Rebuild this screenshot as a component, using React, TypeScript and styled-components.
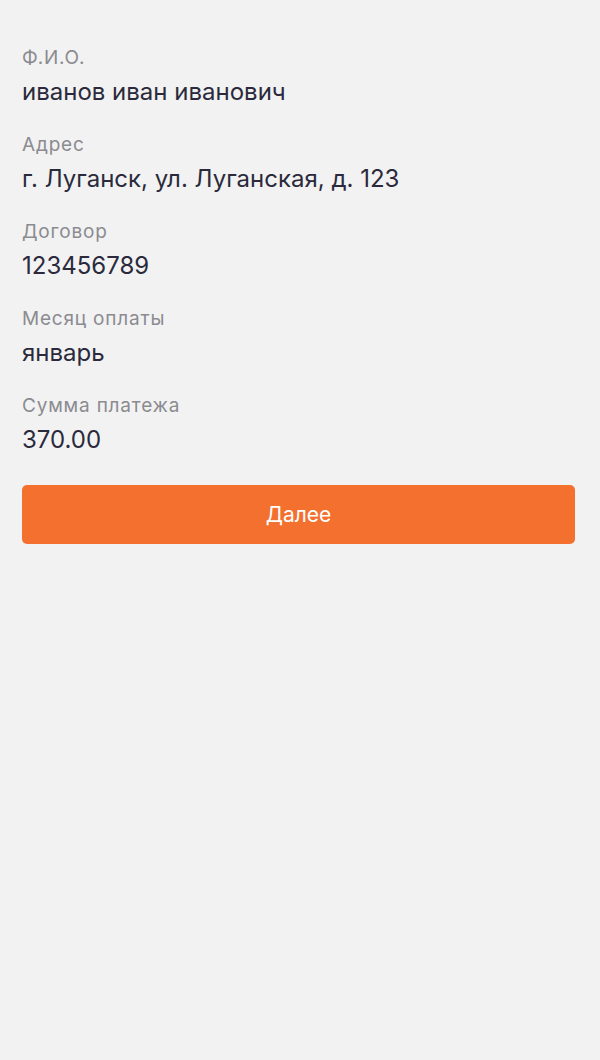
import styled, { createGlobalStyle } from 'styled-components';

const GlobalStyle = createGlobalStyle`
  html, body {
    margin: 0;
    padding: 0;
    background: #f2f2f2;
  }
  body {
    font-family: Inter, "Noto Sans", sans-serif;
    -webkit-font-smoothing: antialiased;
  }
`;

const fields = [
    { label: 'Ф.И.О.', value: 'иванов иван иванович' },
    { label: 'Адрес', value: 'г. Луганск, ул. Луганская, д. 123' },
    { label: 'Договор', value: '123456789' },
    { label: 'Месяц оплаты', value: 'январь' },
    { label: 'Сумма платежа', value: '370.00' },
];

export default function App() {
    return (
        <Screen>
            <GlobalStyle />
            <FieldList>
                {fields.map((f) => (
                    <Field key={f.label}>
                        <Label>{f.label}</Label>
                        <Value>{f.value}</Value>
                    </Field>
                ))}
            </FieldList>
            <NextButton type="button">Далее</NextButton>
        </Screen>
    );
}

const Screen = styled.main`
  min-height: 1060px;
  box-sizing: border-box;
  padding: 45px 25px 0 22px;
  display: flex;
  flex-direction: column;
  background: #f2f2f2;
`;

const FieldList = styled.section`
  display: flex;
  flex-direction: column;
  gap: 24px;
`;

const Field = styled.div`
  display: flex;
  flex-direction: column;
  gap: 5px;
`;

const Label = styled.span`
  font-size: 19px;
  line-height: 26px;
  letter-spacing: 0.8px;
  color: #8b8b90;
`;

const Value = styled.span`
  font-size: 24px;
  line-height: 32px;
  color: #2a2a3c;
`;

const NextButton = styled.button`
  margin-top: 29px;
  height: 59px;
  width: 100%;
  border: none;
  border-radius: 5px;
  background: #f3702f;
  color: #fff;
  font-family: Inter, "Noto Sans", sans-serif;
  font-size: 21px;
  cursor: pointer;
`;
